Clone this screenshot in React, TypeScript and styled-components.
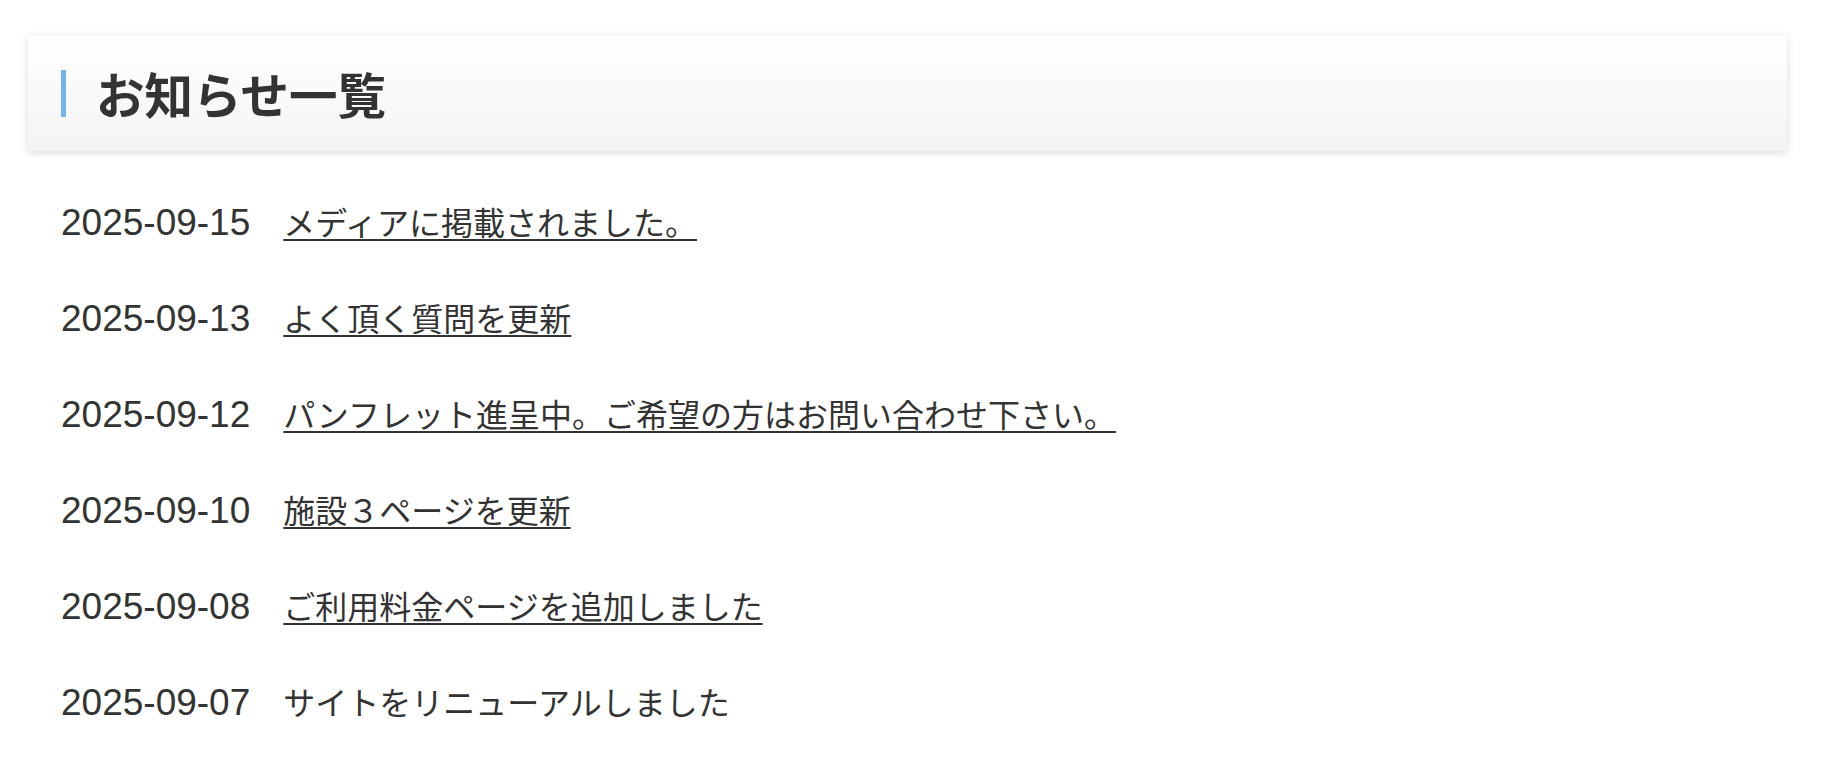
import React from 'react';
import styled, { createGlobalStyle } from 'styled-components';

const GlobalStyle = createGlobalStyle`
  body {
    margin: 0;
    background: #fff;
    color: #333;
    font-family: "Liberation Sans", "Noto Sans CJK JP", sans-serif;
  }
`;

const Page = styled.div`
  padding: 36px 36px 40px 28px;
`;

const HeaderBox = styled.div`
  height: 115px;
  display: flex;
  align-items: center;
  padding-left: 33px;
  background: linear-gradient(to bottom, #ffffff 0%, #f4f4f4 100%);
  box-shadow: 0 2px 8px rgba(0, 0, 0, 0.14);
`;

const Heading = styled.h2`
  margin: 0;
  display: flex;
  align-items: center;
  font-family: "Noto Sans CJK JP", sans-serif;
  font-size: 48.5px;
  font-weight: 700;
  color: #333;
  line-height: 1;

  &::before {
    content: '';
    display: block;
    width: 5px;
    height: 47px;
    margin-right: 30px;
    background: #72b5ee;
  }
`;

const NewsList = styled.ul`
  list-style: none;
  margin: 0;
  padding: 46px 0 0 33px;
  display: flex;
  flex-direction: column;
  gap: 48px;
`;

const NewsRow = styled.li`
  display: flex;
  align-items: baseline;
  gap: 33px;
  height: 48px;
  line-height: 48px;
`;

const NewsDate = styled.span`
  font-family: "Liberation Sans", sans-serif;
  font-size: 37px;
  color: #333;
`;

const NewsLink = styled.a<{ $plain?: boolean }>`
  font-family: "Noto Sans CJK JP", sans-serif;
  font-size: 32px;
  color: #333;
  text-decoration: ${(p) => (p.$plain ? 'none' : 'underline')};
  text-decoration-thickness: 2px;
  text-underline-offset: 4px;
`;

const news = [
  { date: '2025-09-15', title: 'メディアに掲載されました。', link: true },
  { date: '2025-09-13', title: 'よく頂く質問を更新', link: true },
  { date: '2025-09-12', title: 'パンフレット進呈中。ご希望の方はお問い合わせ下さい。', link: true },
  { date: '2025-09-10', title: '施設３ページを更新', link: true },
  { date: '2025-09-08', title: 'ご利用料金ページを追加しました', link: true },
  { date: '2025-09-07', title: 'サイトをリニューアルしました', link: false },
];

export default function App() {
  return (
    <Page>
      <GlobalStyle />
      <HeaderBox>
        <Heading>お知らせ一覧</Heading>
      </HeaderBox>
      <NewsList>
        {news.map((n) => (
          <NewsRow key={n.date}>
            <NewsDate>{n.date}</NewsDate>
            {n.link ? (
              <NewsLink href="#">{n.title}</NewsLink>
            ) : (
              <NewsLink as="span" $plain>
                {n.title}
              </NewsLink>
            )}
          </NewsRow>
        ))}
      </NewsList>
    </Page>
  );
}
